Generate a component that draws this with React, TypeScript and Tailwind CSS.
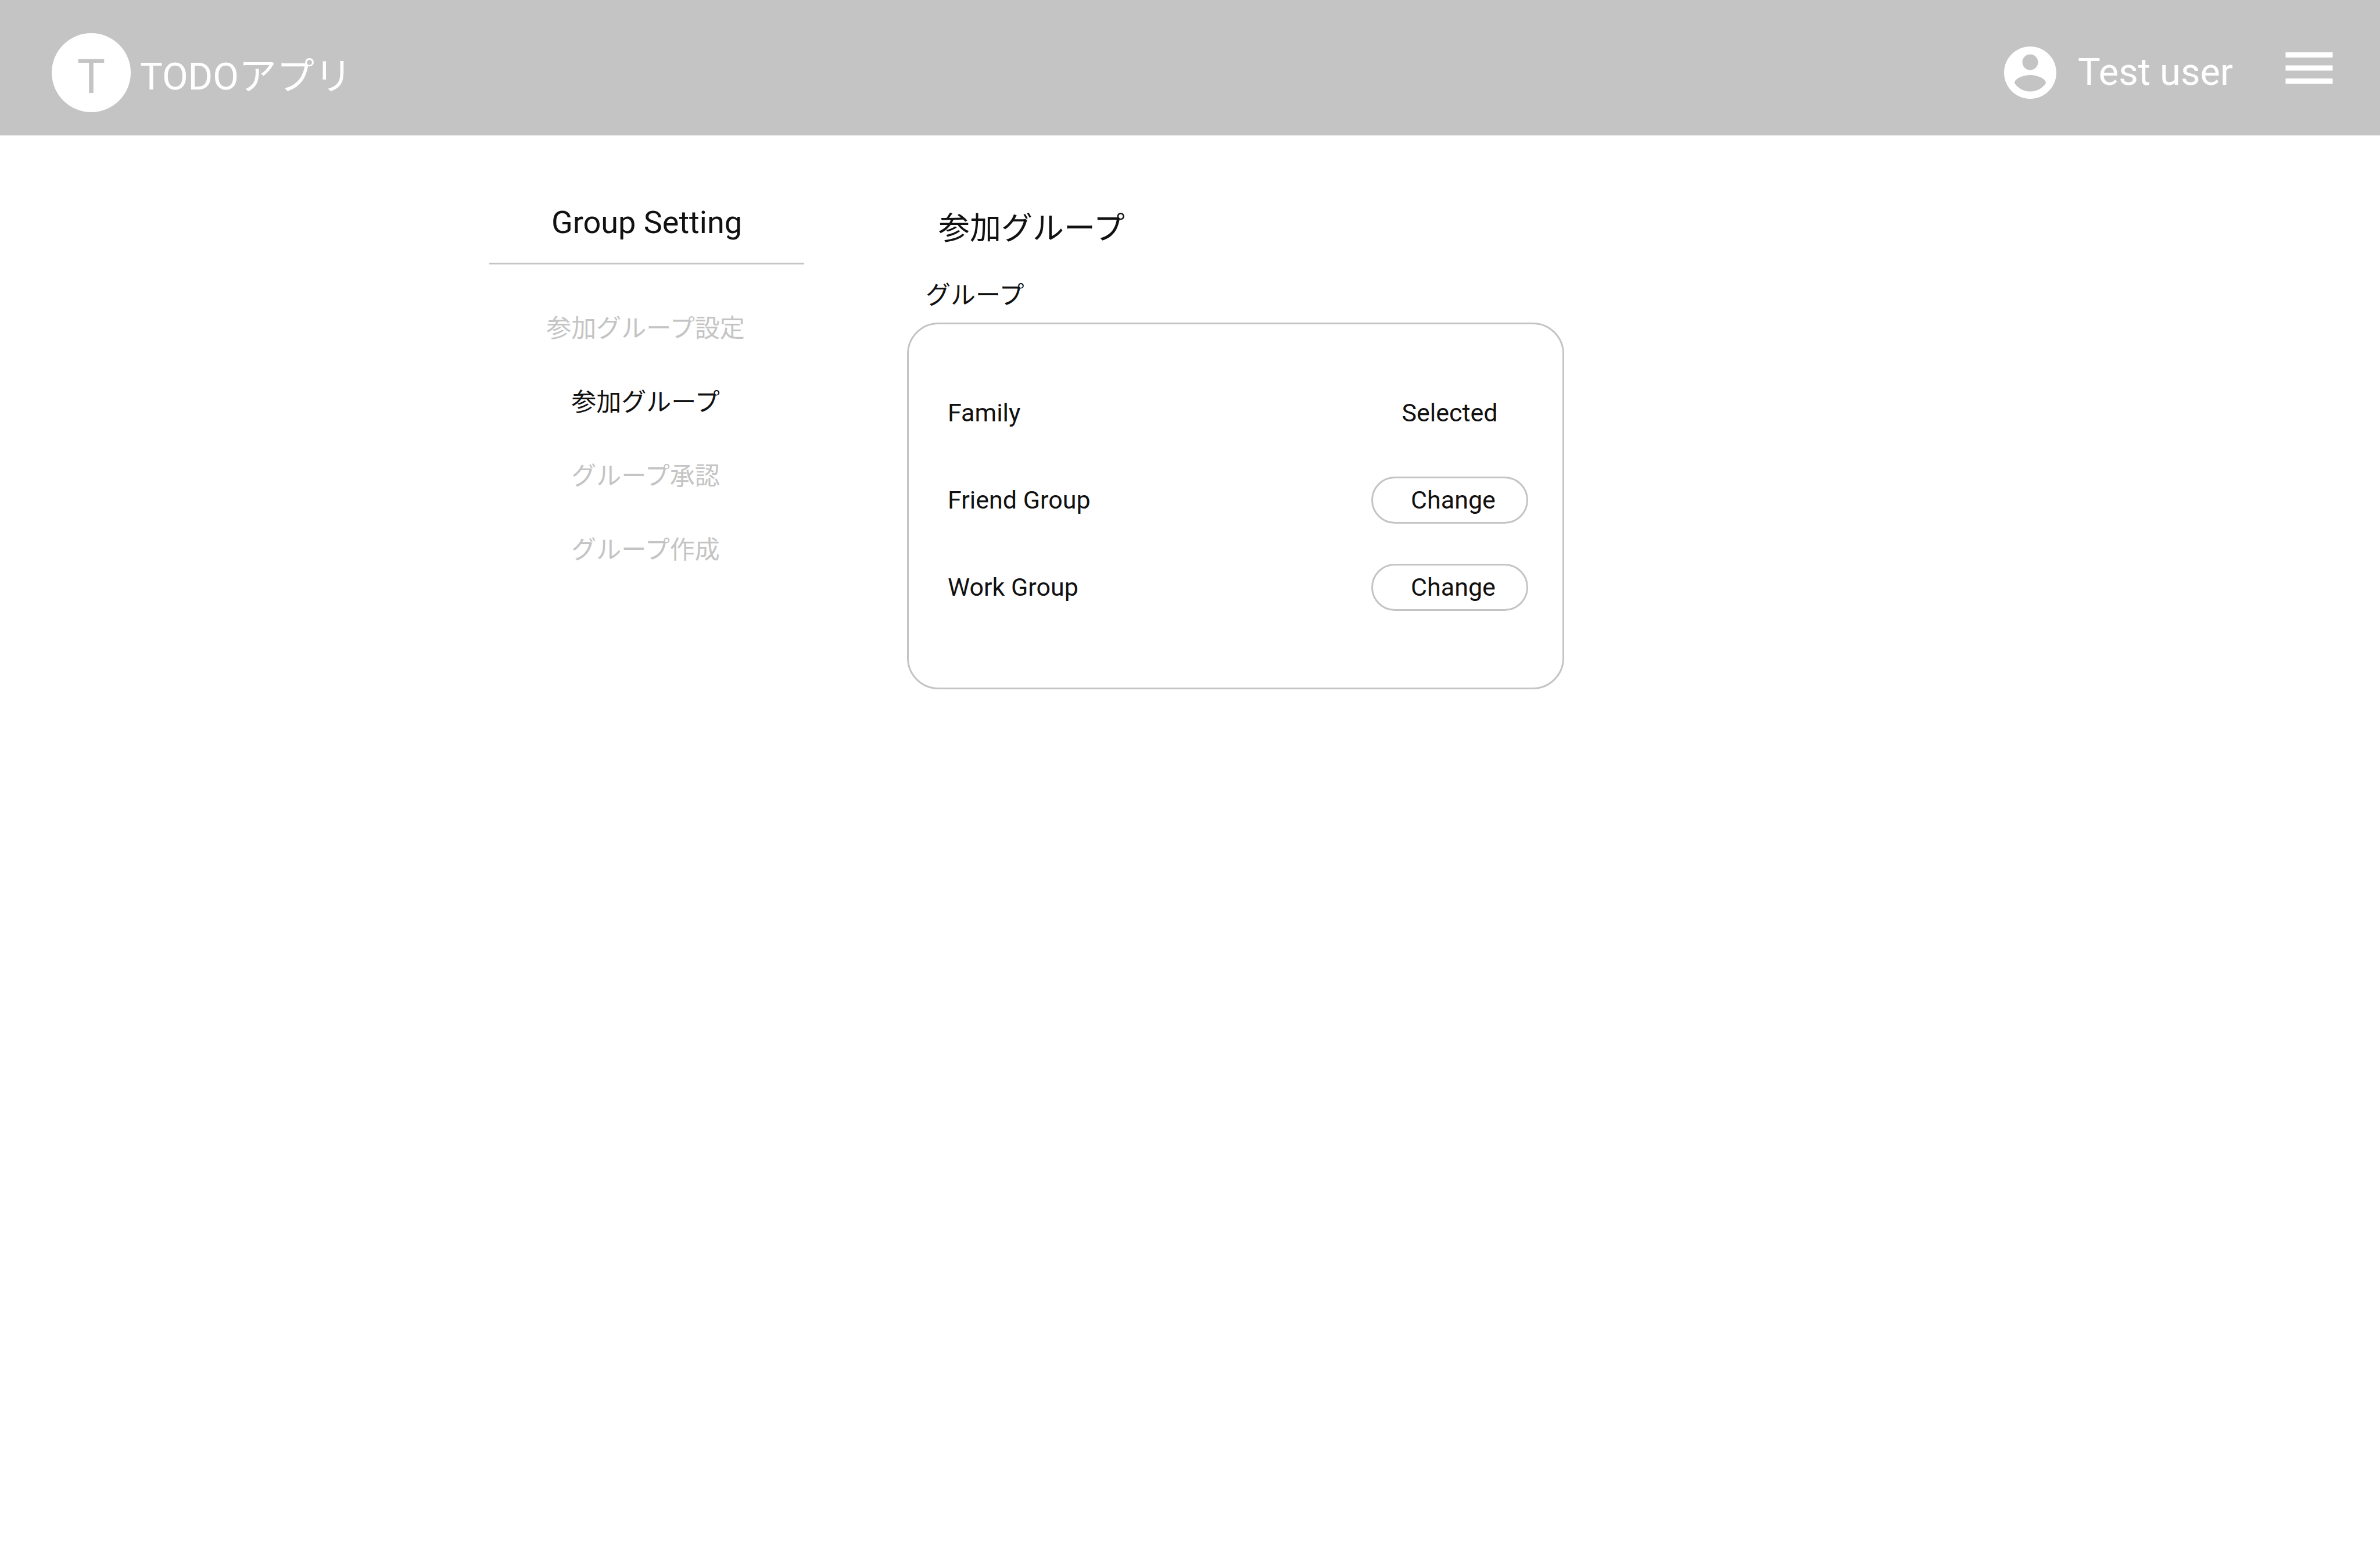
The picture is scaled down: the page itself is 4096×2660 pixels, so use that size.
const menuItems = [
  { label: "参加グループ設定", active: false },
  { label: "参加グループ", active: true },
  { label: "グループ承認", active: false },
  { label: "グループ作成", active: false },
];

const groups = [
  { name: "Family", selected: true },
  { name: "Friend Group", selected: false },
  { name: "Work Group", selected: false },
];

function AccountIcon() {
  return (
    <svg viewBox="0 0 24 24" className="size-[108px] shrink-0" fill="currentColor" aria-hidden="true">
      <path
        fillRule="evenodd"
        d="M12 2C6.48 2 2 6.48 2 12s4.48 10 10 10 10-4.48 10-10S17.52 2 12 2zm0 3c1.66 0 3 1.34 3 3s-1.34 3-3 3-3-1.34-3-3 1.34-3 3-3zm0 14.2c-2.5 0-4.71-1.28-6-3.22.03-1.99 4-3.08 6-3.08 1.99 0 5.97 1.09 6 3.08-1.29 1.94-3.5 3.22-6 3.22z"
      />
    </svg>
  );
}

function MenuIcon() {
  return (
    <svg viewBox="0 0 24 24" className="size-[108px]" fill="currentColor" aria-hidden="true">
      <path d="M3 18h18v-2H3v2zm0-5h18v-2H3v2zm0-7v2h18V6H3z" />
    </svg>
  );
}

function Header() {
  return (
    <header className="flex h-[233px] items-center justify-between bg-[#c4c4c4] pr-[68px] pl-[89px] text-white">
      <a href="#" className="flex items-center gap-4 pt-4">
        <span className="flex size-[136px] items-center justify-center rounded-full bg-white pt-4 text-[81px] leading-none text-[#c4c4c4]">
          T
        </span>
        <span className="pt-4 text-[65px] leading-none">TODOアプリ</span>
      </a>
      <div className="flex items-center gap-[77px]">
        <div className="flex items-center gap-7 pt-4">
          <AccountIcon />
          <span className="text-[65px] leading-none">Test user</span>
        </div>
        <button type="button" aria-label="Menu">
          <MenuIcon />
        </button>
      </div>
    </header>
  );
}

function SideNav() {
  return (
    <nav className="col-start-2 text-center">
      <h2 className="border-b-3 border-[#c4c4c4] pb-[37px] text-[54px] leading-[64px]">Group Setting</h2>
      <ul className="mt-[78px] flex flex-col gap-[63px] pr-1 text-[43px] leading-[64px]">
        {menuItems.map((item) => (
          <li key={item.label}>
            <a
              href="#"
              aria-current={item.active ? "page" : undefined}
              className={item.active ? "text-[#111111]" : "text-[#c4c4c4]"}
            >
              {item.label}
            </a>
          </li>
        ))}
      </ul>
    </nav>
  );
}

function GroupPanel() {
  return (
    <section className="col-start-4 pt-[11px]">
      <h1 className="pl-[54px] text-[54px] leading-[64px]">参加グループ</h1>
      <h2 className="mt-[50px] pl-[32px] text-[43px] leading-[64px]">グループ</h2>
      <ul className="mt-[15px] flex flex-col gap-[69px] rounded-[54px] border-3 border-[#c4c4c4] pt-[112px] pr-[59px] pb-[132px] pl-[67px] text-[43px] leading-none">
        {groups.map((group) => (
          <li key={group.name} className="flex h-[81px] items-center justify-between">
            <span>{group.name}</span>
            {group.selected ? (
              <span className="w-[270px] text-center">Selected</span>
            ) : (
              <button
                type="button"
                className="h-[81px] w-[270px] rounded-full border-3 border-[#c4c4c4] pl-3 text-center"
              >
                Change
              </button>
            )}
          </li>
        ))}
      </ul>
    </section>
  );
}

export default function App() {
  return (
    <div className="min-h-screen bg-white font-['Roboto','Noto_Sans_CJK_JP',sans-serif] text-[#111111]">
      <Header />
      <main className="grid grid-cols-[842fr_542fr_177fr_1131fr_1404fr] pt-[118px]">
        <SideNav />
        <GroupPanel />
      </main>
    </div>
  );
}
